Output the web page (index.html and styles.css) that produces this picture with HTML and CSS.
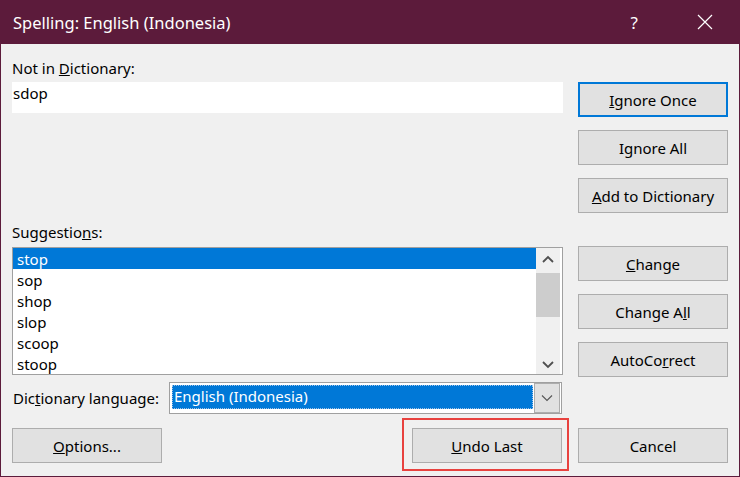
FILE: index.html
```html
<!DOCTYPE html>
<html lang="en">
<head>
  <meta charset="UTF-8">
  <title>Spelling: English (Indonesia)</title>
  <link rel="stylesheet" href="styles.css">
</head>
<body>

  <div class="window">
    <div class="titlebar">
      <span class="title">Spelling: English (Indonesia)</span>
      <span class="help">?</span>
      <svg class="close" width="16" height="16" viewBox="0 0 16 16">
        <path d="M1 1 L15 15 M15 1 L1 15" stroke="#fff" stroke-width="1.2" fill="none"/>
      </svg>
    </div>

    <div class="content">
      <div class="main">
        <div class="left">
          <div class="label first">Not in <u>D</u>ictionary:</div>
          <div class="word-box">sdop</div>

          <div class="label sugg">Suggestio<u>n</u>s:</div>
          <div class="listbox">
            <ul class="items">
              <li class="selected">stop</li>
              <li>sop</li>
              <li>shop</li>
              <li>slop</li>
              <li>scoop</li>
              <li>stoop</li>
            </ul>
            <div class="scrollbar">
              <svg class="arrow" width="24" height="20" viewBox="0 0 24 20">
                <path d="M7 13 L12 8 L17 13" stroke="#505050" stroke-width="1.8" fill="none"/>
              </svg>
              <div class="thumb"></div>
              <div class="track"></div>
              <svg class="arrow" width="24" height="20" viewBox="0 0 24 20">
                <path d="M7 8 L12 13 L17 8" stroke="#505050" stroke-width="1.8" fill="none"/>
              </svg>
            </div>
          </div>

          <div class="lang-row">
            <span class="label">Dic<u>t</u>ionary language:</span>
            <div class="select">
              <div class="select-value"><span>English (Indonesia)</span></div>
              <div class="select-btn">
                <svg width="12" height="8" viewBox="0 0 12 8">
                  <path d="M1 1.5 L6 6.5 L11 1.5" stroke="#555" stroke-width="1.1" fill="none"/>
                </svg>
              </div>
            </div>
          </div>
        </div>

        <div class="right">
          <button class="btn default"><u>I</u>gnore Once</button>
          <button class="btn">Ignore All</button>
          <button class="btn"><u>A</u>dd to Dictionary</button>
          <button class="btn group"><u>C</u>hange</button>
          <button class="btn">Change A<u>l</u>l</button>
          <button class="btn">AutoCo<u>r</u>rect</button>
        </div>
      </div>

      <div class="bottom">
        <button class="btn"><u>O</u>ptions...</button>
        <div class="marked">
          <button class="btn"><u>U</u>ndo Last</button>
        </div>
        <button class="btn">Cancel</button>
      </div>
    </div>
  </div>

</body>
</html>
```

FILE: styles.css
```css
body {
  margin: 0;
  font-family: "Noto Sans", "Open Sans", sans-serif;
  font-size: 15px;
  color: #000;
  background-color: #f0f0f0;
}

.window {
  width: 738px;
  height: 476px;
  border: 1px solid #5c1b3b;
  border-top: none;
  background-color: #f0f0f0;
}

/* Barra de titulo */
.titlebar {
  height: 44px;
  background-color: #5c1b3b;
  color: white;
  display: flex;
  align-items: center;
  padding: 0 26px 0 12px;
}

.titlebar .title {
  font-size: 16.5px;
  flex: 1;
}

.titlebar .help {
  font-size: 17px;
  margin-right: 59px;
}

.content {
  padding: 0 11px;
}

.main {
  display: flex;
  gap: 15px;
}

.left {
  width: 551px;
}

.label {
  line-height: 20px;
}

.label.first {
  margin-top: 14px;
  margin-bottom: 4px;
}

.label.sugg {
  margin-top: 109px;
  margin-bottom: 5px;
}

.word-box {
  height: 31px;
  background-color: white;
  padding-left: 1px;
  line-height: 23px;
}

/* Lista de sugestoes */
.listbox {
  height: 126px;
  border: 1px solid #a0a0a0;
  background-color: white;
  display: flex;
}

.items {
  list-style: none;
  margin: 0;
  padding: 0;
  flex: 1;
}

.items li {
  height: 21px;
  line-height: 22px;
  padding-left: 4px;
}

.items li.selected {
  background-color: #0078d7;
  color: white;
}

.scrollbar {
  width: 24px;
  margin-right: 2px;
  background-color: #f0f0f0;
  display: flex;
  flex-direction: column;
}

.scrollbar .arrow {
  display: block;
  height: 20px;
  margin-top: 1px;
}

.scrollbar .thumb {
  height: 44px;
  margin-top: 4px;
  background-color: #cdcdcd;
}

.scrollbar .track {
  flex: 1;
}

.lang-row {
  display: flex;
  align-items: center;
  margin-top: 7px;
  height: 32px;
}

.lang-row .label {
  width: 157px;
  text-indent: 1px;
}

.select {
  width: 388px;
  height: 30px;
  border: 1px solid #a0a0a0;
  background-color: white;
  display: flex;
  padding: 0 1px 0 2px;
}

.select-value {
  flex: 1;
  padding: 2px 1px 2px 0;
}

.select-value span {
  display: block;
  height: 24px;
  line-height: 23px;
  padding-left: 2px;
  background-color: #0078d7;
  color: white;
  outline: 1px dotted #9fc2e6;
  outline-offset: -1px;
}

.select-btn {
  width: 24px;
  height: 28px;
  background-color: #e1e1e1;
  border: 1px solid #adadad;
  display: flex;
  align-items: center;
  justify-content: center;
}

/* Botoes */
.right {
  width: 150px;
  padding-top: 38px;
  display: flex;
  flex-direction: column;
  gap: 13px;
}

.btn {
  width: 150px;
  height: 35px;
  padding: 0;
  font-family: inherit;
  font-size: 15px;
  color: #000;
  background-color: #e1e1e1;
  border: 1px solid #adadad;
}

.btn.default {
  border: 2px solid #0078d7;
}

.btn.group {
  margin-top: 20px;
}

.bottom {
  display: flex;
  align-items: center;
  margin-top: 14px;
  gap: 16px;
}

.bottom .marked {
  margin-left: auto;
  position: relative;
  display: flex;
}

.marked::after {
  content: "";
  position: absolute;
  top: -10px;
  left: -10px;
  right: -7px;
  bottom: -8px;
  border: 2px solid #e8423f;
}
```
